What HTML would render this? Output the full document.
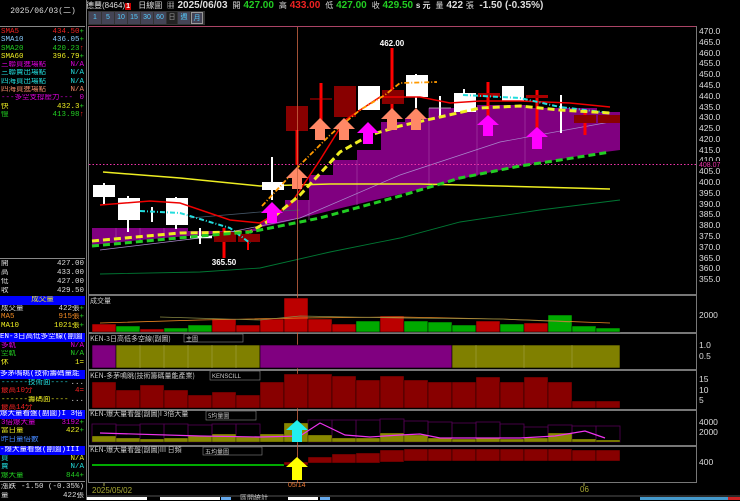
<!DOCTYPE html>
<html><head><meta charset="utf-8"><style>
*{margin:0;padding:0;box-sizing:border-box}
body{width:740px;height:500px;background:#000;overflow:hidden;position:relative;font-family:"Liberation Sans","Noto Sans CJK TC",sans-serif;color:#ddd}
.a{position:absolute;white-space:nowrap}
.lp{position:absolute;left:0;width:85px;font-size:7.5px;line-height:8.3px;font-family:"Liberation Mono","Noto Sans CJK TC",monospace;overflow:hidden}
.r{display:flex;justify-content:space-between;padding:0 1px;height:8.3px;white-space:nowrap;overflow:hidden}
.h{background:#0000ff;color:#fff;text-align:center;overflow:hidden;white-space:nowrap;height:9px;line-height:9px}
</style></head><body>
<div class="a" style="left:0;top:0;width:86px;height:26px;font-size:8px;color:#ddd;text-align:center;line-height:24px;font-family:'Liberation Mono','Noto Sans CJK TC',monospace">2025/06/03(二)</div>
<div class="a" style="left:86px;top:0;font-size:10px;font-weight:bold;color:#ddd;line-height:11px">
<span style="font-size:8px;font-weight:normal">德豐(8464)</span><span style="background:#c00;color:#fff;font-size:7px;padding:0 1px">1</span>
<span style="font-size:8px;font-weight:normal">&nbsp;&nbsp;日線圖&nbsp;&nbsp;▦</span> 2025/06/03 <span style="font-size:8px;font-weight:normal">&nbsp;開</span> <span style="color:#2c2">427.00</span> <span style="font-size:8px;font-weight:normal">&nbsp;高</span> <span style="color:#e22">433.00</span> <span style="font-size:8px;font-weight:normal">&nbsp;低</span> <span style="color:#2c2">427.00</span> <span style="font-size:8px;font-weight:normal">&nbsp;收</span> <span style="color:#2c2">429.50</span> <span style="font-size:8px">s 元</span> <span style="font-size:8px;font-weight:normal">&nbsp;量</span> 422 <span style="font-size:8px;font-weight:normal">張</span>&nbsp; -1.50 (-0.35%)</div>
<div class="a" style="left:88px;top:11px;height:14px;width:117px;background:#333;display:flex;gap:1px;padding:1px;font-size:7px">
<span style="background:#445;color:#5cf;width:12px;text-align:center;line-height:12px">1</span><span style="background:#445;color:#5cf;width:12px;text-align:center;line-height:12px">5</span><span style="background:#445;color:#5cf;width:12px;text-align:center;line-height:12px">10</span><span style="background:#445;color:#5cf;width:12px;text-align:center;line-height:12px">15</span><span style="background:#445;color:#5cf;width:12px;text-align:center;line-height:12px">30</span><span style="background:#445;color:#5cf;width:12px;text-align:center;line-height:12px">60</span><span style="background:#222;color:#999;width:10px;text-align:center;line-height:12px">日</span><span style="background:#445;color:#5cf;width:12px;text-align:center;line-height:12px">週</span><span style="background:#445;color:#5cf;width:12px;text-align:center;line-height:12px;border:1px solid #999">月</span></div>

<div class="lp" style="top:26px;border-top:1px solid #888;padding-top:1px">
<div class="r"><span style="color:#e22">SMA5</span><span style="color:#e22">434.50<span style="color:#2c2">+</span></span></div>
<div class="r"><span style="color:#8cf">SMA10</span><span style="color:#8cf">436.05<span style="color:#2c2">+</span></span></div>
<div class="r"><span style="color:#2c2">SMA20</span><span style="color:#2c2">420.23<span style="color:#e22">↑</span></span></div>
<div class="r"><span style="color:#ee2">SMA60</span><span style="color:#ee2">396.79<span style="color:#2c2">+</span></span></div>
<div class="r"><span style="color:#d0d">三聯買進場點</span><span style="color:#d0d">N/A</span></div>
<div class="r"><span style="color:#2dd">三聯賣出場點</span><span style="color:#2dd">N/A</span></div>
<div class="r"><span style="color:#2dd">四海買出場點</span><span style="color:#2dd">N/A</span></div>
<div class="r"><span style="color:#e86">四海買進場點</span><span style="color:#e86">N/A</span></div>
<div class="r"><span style="color:#d0d">---多空支撐壓力---</span><span style="color:#d0d">0</span></div>
<div class="r"><span style="color:#ee2">快</span><span style="color:#ee2">432.3<span style="color:#2c2">+</span></span></div>
<div class="r"><span style="color:#2c2">慢</span><span style="color:#2c2">413.98<span style="color:#e22">↑</span></span></div>
</div>
<div class="lp" style="top:258px;border-top:1px solid #888;padding-top:1px;line-height:9px">
<div class="r" style="height:9px"><span>開</span><span>427.00</span></div>
<div class="r" style="height:9px"><span>高</span><span>433.00</span></div>
<div class="r" style="height:9px"><span>低</span><span>427.00</span></div>
<div class="r" style="height:9px"><span>收</span><span>429.50</span></div>
</div>
<div class="lp" style="top:296px">
<div class="h" style="color:#ee2">成交量</div>
<div class="r"><span>成交量</span><span>422張<span style="color:#2c2">+</span></span></div>
<div class="r"><span style="color:#e82">MA5</span><span style="color:#e82">915張<span style="color:#2c2">+</span></span></div>
<div class="r"><span style="color:#ee2">MA10</span><span style="color:#ee2">1021張<span style="color:#2c2">+</span></span></div>
</div>
<div class="lp" style="top:333px">
<div class="h" style="text-align:left">EN-3日高低多空線(副圖</div>
<div class="r"><span style="color:#d0d">多軌</span><span style="color:#d0d">N/A</span></div>
<div class="r"><span style="color:#2c2">空軌</span><span style="color:#2c2">N/A</span></div>
<div class="r"><span style="color:#ee2">休</span><span style="color:#ee2">1=</span></div>
</div>
<div class="lp" style="top:370px">
<div class="h" style="text-align:left">多茅鳴眺(技術籌碼量能</div>
<div class="r"><span style="color:#2dd">------技術面----</span><span>...</span></div>
<div class="r"><span style="color:#e22">最高10分</span><span style="color:#e22">4=</span></div>
<div class="r"><span style="color:#ee2">------籌碼面----</span><span>...</span></div>
<div class="r"><span style="color:#e22">最高14分</span><span></span></div>
</div>
<div class="lp" style="top:410px">
<div class="h" style="text-align:left">爆大量看盤(副圖)I 3倍</div>
<div class="r"><span style="color:#d0d">3倍爆大量</span><span style="color:#d0d">3192<span style="color:#2c2">+</span></span></div>
<div class="r"><span style="color:#ee2">當日量</span><span style="color:#ee2">422<span style="color:#2c2">+</span></span></div>
<div class="r"><span style="color:#48f">昨日量倍數</span><span></span></div>
</div>
<div class="lp" style="top:446px">
<div class="h" style="text-align:left">-爆大量看盤(副圖)III</div>
<div class="r"><span style="color:#2dd">買</span><span style="color:#ee2">N/A</span></div>
<div class="r"><span style="color:#2dd">賣</span><span style="color:#2dd">N/A</span></div>
<div class="r"><span style="color:#2c2">爆大量</span><span style="color:#2c2">844<span style="color:#2c2">+</span></span></div>
</div>
<div class="lp" style="top:481px;border-top:1px solid #888;padding-top:1px;line-height:9px">
<div class="r" style="height:9px"><span>漲跌</span><span>-1.50 (-0.35%)</span></div>
<div class="r" style="height:9px"><span>量</span><span>422張</span></div>
</div>

<svg class="a" style="left:0;top:0" width="740" height="500" font-family="Liberation Sans" font-size="8">
<line x1="86.5" y1="0" x2="86.5" y2="500" stroke="#777"/>
<g fill="none" stroke="#777">
<rect x="88.5" y="26.5" width="608" height="268"/>
<rect x="88.5" y="295.5" width="608" height="37"/>
<rect x="88.5" y="333.5" width="608" height="36"/>
<rect x="88.5" y="370.5" width="608" height="39"/>
<rect x="88.5" y="410.5" width="608" height="35"/>
<rect x="88.5" y="446.5" width="608" height="36"/>
</g>
<line x1="89" y1="26.5" x2="696" y2="26.5" stroke="#a46"/>
<polygon fill="#800080" points="92,228 188,228 188,231 260,231 260,222 285,210 285,200 309,200 309,175 333,175 333,160 357,160 357,150 381,150 381,122 405,122 405,118 429,118 429,108 477,108 477,105 525,105 525,108 597,108 597,112 620,112 620,150 597,153 525,165 477,175 405,193 333,210 285,222 237,232 188,236 140,240 92,245"/>
<g stroke="#a4a" stroke-width="0.6"><line x1="116" y1="228" x2="116" y2="244"/><line x1="140" y1="228" x2="140" y2="240"/><line x1="164" y1="228" x2="164" y2="238"/><line x1="309" y1="200" x2="309" y2="220"/><line x1="357" y1="160" x2="357" y2="205"/><line x1="429" y1="108" x2="429" y2="188"/><line x1="477" y1="108" x2="477" y2="176"/><line x1="525" y1="105" x2="525" y2="166"/></g>
<polyline fill="none" stroke="#a8c" stroke-width="0.7" points="100,250 200,238 300,218 400,175 500,142 610,122"/>
<polyline fill="none" stroke="#073" stroke-width="0.9" points="100,274 200,272 260,268 330,252 400,238 460,222 540,210 620,200"/>
<polyline fill="none" stroke="#456" stroke-width="0.8" points="190,218 260,212 300,210"/>
<line x1="89" y1="164.5" x2="696" y2="164.5" stroke="#e3a" stroke-dasharray="1.5,2"/>
<polyline fill="none" stroke="#ee2" stroke-width="1.5" points="103,172 180,178 260,186 330,184 420,184 500,186 610,189"/>
<g>
<line x1="104" y1="183" x2="104" y2="205" stroke="#fff" stroke-width="2"/><rect x="93" y="185" width="22" height="12" fill="#fff"/>
<line x1="128" y1="196" x2="128" y2="232" stroke="#fff" stroke-width="2"/><rect x="118" y="198" width="22" height="22" fill="#fff"/>
<line x1="152" y1="207" x2="152" y2="222" stroke="#fff" stroke-width="2"/>
<line x1="176" y1="197" x2="176" y2="229" stroke="#fff" stroke-width="2"/><rect x="166" y="198" width="22" height="27" fill="#fff"/>
<line x1="200" y1="228" x2="200" y2="244" stroke="#fff" stroke-width="2"/><line x1="190" y1="237" x2="212" y2="237" stroke="#fff" stroke-width="2.5"/>
<line x1="224" y1="228" x2="224" y2="258" stroke="#f00" stroke-width="3"/><rect x="214" y="232" width="22" height="10" fill="#800"/>
<line x1="248" y1="230" x2="248" y2="250" stroke="#f00" stroke-width="2"/><rect x="238" y="234" width="22" height="8" fill="#800"/>
<line x1="272" y1="157" x2="272" y2="200" stroke="#fff" stroke-width="2"/><rect x="262" y="182" width="22" height="8" fill="#fff"/>
<rect x="286" y="106" width="22" height="25" fill="#800"/><line x1="297" y1="130" x2="297" y2="165" stroke="#f00" stroke-width="3"/>
<line x1="321" y1="83" x2="321" y2="130" stroke="#f00" stroke-width="3"/><line x1="310" y1="99" x2="332" y2="99" stroke="#c00" stroke-width="1"/>
<rect x="334" y="86" width="22" height="31" fill="#800"/>
<rect x="358" y="86" width="22" height="24" fill="#fff"/>
<line x1="392" y1="48" x2="392" y2="118" stroke="#f00" stroke-width="3"/><rect x="382" y="90" width="22" height="14" fill="#800"/>
<line x1="416" y1="74" x2="416" y2="108" stroke="#fff" stroke-width="2"/><rect x="406" y="75" width="22" height="22" fill="#fff"/>
<line x1="440" y1="96" x2="440" y2="118" stroke="#fff" stroke-width="2"/><line x1="429" y1="108" x2="451" y2="108" stroke="#ccc" stroke-width="0.8"/>
<line x1="464" y1="89" x2="464" y2="112" stroke="#fff" stroke-width="2"/><rect x="454" y="93" width="22" height="19" fill="#fff"/>
<line x1="488" y1="82" x2="488" y2="127" stroke="#f00" stroke-width="3"/><rect x="478" y="93" width="22" height="4" fill="#a00"/>
<rect x="502" y="86" width="22" height="15" fill="#fff"/>
<line x1="537" y1="90" x2="537" y2="148" stroke="#f00" stroke-width="3"/><rect x="526" y="95" width="22" height="3" fill="#a00"/>
<line x1="561" y1="95" x2="561" y2="133" stroke="#fff" stroke-width="2"/>
<line x1="585" y1="113" x2="585" y2="135" stroke="#f00" stroke-width="3"/><rect x="574" y="115" width="22" height="8" fill="#800"/>
<rect x="598" y="115" width="22" height="8" fill="#800"/>
</g>
<polyline fill="none" stroke="#e00" stroke-width="1.5" points="100,205 150,201 180,203 230,220 260,223 290,205 320,160 345,120 380,97 420,97 450,103 480,101 520,101 570,103 610,107"/>
<polyline fill="none" stroke="#2dd" stroke-width="2" stroke-dasharray="5,2,1,2" points="140,211 180,213 230,228 250,243"/>
<polyline fill="none" stroke="#2dd" stroke-width="2" stroke-dasharray="5,2,1,2" points="463,95 520,98 560,107 610,113"/>
<polyline fill="none" stroke="#f90" stroke-width="1.8" stroke-dasharray="5,2,1,2" points="262,206 300,165 330,135 360,110 385,95 400,83 437,82"/>
<polyline fill="none" stroke="#ee2" stroke-width="3" stroke-dasharray="7,4" points="92,241 180,233 250,232 270,220 300,195 340,152 370,135 400,126 440,117 480,108 520,106 560,110 610,113"/>
<polyline fill="none" stroke="#2c2" stroke-width="3" stroke-dasharray="7,4" points="92,246 200,236 250,232 320,218 400,196 460,178 520,166 560,160 610,152"/>
<g fill="#f86">
<polygon points="297,167 308,178 302,178 302,189 292,189 292,178 286,178"/>
<polygon points="320,118 331,129 325,129 325,140 315,140 315,129 309,129"/>
<polygon points="344,118 355,129 349,129 349,140 339,140 339,129 333,129"/>
<polygon points="392,108 403,119 397,119 397,130 387,130 387,119 381,119"/>
<polygon points="416,108 427,119 421,119 421,130 411,130 411,119 405,119"/>
</g>
<g fill="#f0f">
<polygon points="272,202 283,213 277,213 277,223 267,223 267,213 261,213"/>
<polygon points="368,122 379,133 373,133 373,144 363,144 363,133 357,133"/>
<polygon points="488,115 499,125 493,125 493,136 483,136 483,125 477,125"/>
<polygon points="537,127 548,137 542,137 542,149 532,149 532,137 526,137"/>
</g>
<text x="392" y="46" fill="#fff" font-weight="bold" text-anchor="middle">462.00</text>
<text x="224" y="265" fill="#fff" font-weight="bold" text-anchor="middle">365.50</text>
<line x1="297.5" y1="27" x2="297.5" y2="483" stroke="#c64" stroke-width="0.8"/>
<g fill="#ddd" font-size="8.5">
<text x="699" y="34">470.0</text><text x="699" y="45">465.0</text><text x="699" y="56">460.0</text><text x="699" y="66">455.0</text><text x="699" y="77">450.0</text><text x="699" y="88">445.0</text><text x="699" y="99">440.0</text><text x="699" y="110">435.0</text><text x="699" y="120">430.0</text><text x="699" y="131">425.0</text><text x="699" y="142">420.0</text><text x="699" y="153">415.0</text><text x="699" y="163">410.0</text><text x="699" y="185">400.0</text><text x="699" y="196">395.0</text><text x="699" y="207">390.0</text><text x="699" y="217">385.0</text><text x="699" y="228">380.0</text><text x="699" y="239">375.0</text><text x="699" y="250">370.0</text><text x="699" y="261">365.0</text><text x="699" y="271">360.0</text><text x="699" y="282">355.0</text><text x="699" y="174">405.0</text>
</g>
<rect x="697" y="161" width="43" height="7" fill="#000"/><text x="699" y="167" fill="#e3a" font-size="7">408.07</text>
<text x="90" y="303" fill="#ccc" font-size="7" font-family="Noto Sans CJK TC">成交量</text>
<g stroke="#000" stroke-width="0.5">
<rect x="92" y="324" width="24" height="8" fill="#b00"/><rect x="116" y="326" width="24" height="6" fill="#0a0"/><rect x="140" y="329" width="24" height="3" fill="#b00"/><rect x="164" y="328" width="24" height="4" fill="#0a0"/><rect x="188" y="325" width="24" height="7" fill="#0a0"/><rect x="212" y="319" width="24" height="13" fill="#b00"/><rect x="236" y="325" width="24" height="7" fill="#b00"/><rect x="260" y="319" width="24" height="13" fill="#b00"/><rect x="284" y="298" width="24" height="34" fill="#b00"/><rect x="308" y="319" width="24" height="13" fill="#b00"/><rect x="332" y="324" width="24" height="8" fill="#b00"/><rect x="356" y="321" width="24" height="11" fill="#0a0"/><rect x="380" y="316" width="24" height="16" fill="#b00"/><rect x="404" y="321" width="24" height="11" fill="#0a0"/><rect x="428" y="322" width="24" height="10" fill="#0a0"/><rect x="452" y="325" width="24" height="7" fill="#0a0"/><rect x="476" y="321" width="24" height="11" fill="#b00"/><rect x="500" y="324" width="24" height="8" fill="#0a0"/><rect x="524" y="323" width="24" height="9" fill="#b00"/><rect x="548" y="315" width="24" height="17" fill="#0a0"/><rect x="572" y="326" width="24" height="6" fill="#0a0"/><rect x="596" y="328" width="24" height="4" fill="#0a0"/>
</g>
<polyline fill="none" stroke="#e82" stroke-width="0.8" points="100,323 200,320 300,318 400,317 500,319 610,323"/>
<polyline fill="none" stroke="#884" stroke-width="0.8" points="160,317 260,320 300,316 400,318 500,319 570,322"/>
<text x="699" y="318" fill="#ddd" font-size="8.5">2000</text>
<g stroke="#000" stroke-width="0.6">
<rect x="92" y="345" width="24" height="23" fill="#800080"/>
<rect x="116" y="345" width="144" height="23" fill="#808000"/>
<rect x="260" y="345" width="192" height="23" fill="#800080"/>
<rect x="452" y="345" width="168" height="23" fill="#808000"/>
</g>
<g stroke="#aa5" stroke-width="0.5"><line x1="140" y1="345" x2="140" y2="368"/><line x1="164" y1="345" x2="164" y2="368"/><line x1="188" y1="345" x2="188" y2="368"/><line x1="212" y1="345" x2="212" y2="368"/><line x1="236" y1="345" x2="236" y2="368"/><line x1="476" y1="345" x2="476" y2="368"/><line x1="524" y1="345" x2="524" y2="368"/><line x1="572" y1="345" x2="572" y2="368"/></g>
<text x="90" y="341" fill="#ccc" font-size="7" font-family="Noto Sans CJK TC">KEN-3日高低多空線(副圖)</text>
<rect x="184" y="334" width="59" height="8" fill="#000" stroke="#888" stroke-width="0.6"/><text x="186" y="341" fill="#ccc" font-size="6" font-family="Noto Sans CJK TC">主圖</text>
<text x="699" y="348" fill="#ddd" font-size="8.5">1.0</text><text x="699" y="359" fill="#ddd" font-size="8.5">0.5</text>
<g fill="#800" stroke="#000" stroke-width="0.4">
<rect x="92" y="382" width="24" height="26"/><rect x="116" y="390" width="24" height="18"/><rect x="140" y="385" width="24" height="23"/><rect x="164" y="390" width="24" height="18"/><rect x="188" y="395" width="24" height="13"/><rect x="212" y="392" width="24" height="16"/><rect x="236" y="395" width="24" height="13"/><rect x="260" y="382" width="24" height="26"/><rect x="284" y="374" width="24" height="34"/><rect x="308" y="374" width="24" height="34"/><rect x="332" y="376" width="24" height="32"/><rect x="356" y="380" width="24" height="28"/><rect x="380" y="376" width="24" height="32"/><rect x="404" y="380" width="24" height="28"/><rect x="428" y="382" width="24" height="26"/><rect x="452" y="382" width="24" height="26"/><rect x="476" y="377" width="24" height="31"/><rect x="500" y="382" width="24" height="26"/><rect x="524" y="377" width="24" height="31"/><rect x="548" y="382" width="24" height="26"/><rect x="572" y="401" width="24" height="7"/><rect x="596" y="401" width="24" height="7"/>
</g>
<text x="90" y="378" fill="#ccc" font-size="7" font-family="Noto Sans CJK TC">KEN-多茅鳴眺(技術籌碼量能產業)</text>
<rect x="210" y="371" width="50" height="9" fill="#000" stroke="#888" stroke-width="0.6"/><text x="212" y="378" fill="#ccc" font-size="6">KENSCILL</text>
<text x="699" y="382" fill="#ddd" font-size="8.5">15</text><text x="699" y="393" fill="#ddd" font-size="8.5">10</text><text x="699" y="403" fill="#ddd" font-size="8.5">5</text>
<g fill="none" stroke="#505" stroke-width="0.8">
<rect x="92" y="424" width="24" height="18"/><rect x="116" y="425" width="24" height="17"/><rect x="140" y="424" width="24" height="18"/><rect x="164" y="424" width="24" height="18"/><rect x="188" y="425" width="24" height="17"/><rect x="212" y="424" width="24" height="18"/><rect x="236" y="424" width="24" height="18"/><rect x="308" y="420" width="24" height="22"/><rect x="332" y="420" width="24" height="22"/><rect x="356" y="420" width="24" height="22"/><rect x="380" y="419" width="24" height="23"/><rect x="404" y="421" width="24" height="21"/><rect x="428" y="422" width="24" height="20"/><rect x="452" y="423" width="24" height="19"/><rect x="476" y="422" width="24" height="20"/><rect x="500" y="424" width="24" height="18"/><rect x="524" y="427" width="24" height="15"/><rect x="548" y="425" width="24" height="17"/><rect x="572" y="426" width="24" height="16"/><rect x="596" y="426" width="24" height="16"/>
</g>
<g fill="#880" stroke="#000" stroke-width="0.3">
<rect x="92" y="436" width="24" height="6"/><rect x="116" y="438" width="24" height="4"/><rect x="140" y="439" width="24" height="3"/><rect x="164" y="438" width="24" height="4"/><rect x="188" y="436" width="24" height="6"/><rect x="212" y="434" width="24" height="8"/><rect x="236" y="437" width="24" height="5"/><rect x="260" y="434" width="24" height="8"/><rect x="284" y="423" width="24" height="19"/><rect x="308" y="435" width="24" height="7"/><rect x="332" y="438" width="24" height="4"/><rect x="356" y="438" width="24" height="4"/><rect x="380" y="433" width="24" height="9"/><rect x="404" y="435" width="24" height="7"/><rect x="428" y="438" width="24" height="4"/><rect x="452" y="439" width="24" height="3"/><rect x="476" y="438" width="24" height="4"/><rect x="500" y="439" width="24" height="3"/><rect x="524" y="438" width="24" height="4"/><rect x="548" y="433" width="24" height="9"/><rect x="572" y="439" width="24" height="3"/><rect x="596" y="440" width="24" height="2"/>
</g>
<polyline fill="none" stroke="#e3e" stroke-width="1.2" points="100,433 200,436 260,437 300,436 320,423 345,435 370,437 400,435 420,434 440,438 480,438 520,438 555,436 585,431 605,438"/>
<polygon fill="#2ee" points="297,420 308,430 302,430 302,442 292,442 292,430 286,430"/>
<text x="90" y="416" fill="#ccc" font-size="7" font-family="Noto Sans CJK TC">KEN-爆大量看盤(副圖)I 3倍大量</text>
<rect x="206" y="411" width="50" height="9" fill="#000" stroke="#888" stroke-width="0.6"/><text x="208" y="418" fill="#ccc" font-size="6" font-family="Noto Sans CJK TC">5均量圖</text>
<text x="699" y="425" fill="#ddd" font-size="8.5">4000</text><text x="699" y="435" fill="#ddd" font-size="8.5">2000</text>
<line x1="92" y1="465" x2="284" y2="465" stroke="#0a0" stroke-width="2"/>
<g fill="#800" stroke="#000" stroke-width="0.4">
<rect x="284" y="462" width="24" height="3"/><rect x="308" y="457" width="24" height="6"/><rect x="332" y="454" width="24" height="9"/><rect x="356" y="453" width="24" height="10"/><rect x="380" y="450" width="24" height="12"/><rect x="404" y="449" width="24" height="12"/><rect x="428" y="449" width="24" height="12"/><rect x="452" y="449" width="24" height="12"/><rect x="476" y="449" width="24" height="12"/><rect x="500" y="449" width="24" height="12"/><rect x="524" y="449" width="24" height="12"/><rect x="548" y="449" width="24" height="12"/><rect x="572" y="450" width="24" height="11"/><rect x="596" y="450" width="24" height="11"/>
</g>
<polygon fill="#ff0" points="297,457 308,467 302,467 302,480 292,480 292,467 286,467"/>
<text x="90" y="452" fill="#ccc" font-size="7" font-family="Noto Sans CJK TC">KEN-爆大量看盤(副圖)III 日頻</text>
<rect x="203" y="447" width="59" height="8" fill="#000" stroke="#888" stroke-width="0.6"/><text x="205" y="454" fill="#ccc" font-size="6" font-family="Noto Sans CJK TC">五均量圖</text>
<text x="699" y="465" fill="#ddd" font-size="8.5">400</text>
<line x1="104" y1="483" x2="104" y2="486" stroke="#aa5"/><line x1="584" y1="483" x2="584" y2="486" stroke="#aa5"/>
<text x="92" y="493" fill="#aa3" font-size="8">2025/05/02</text>
<text x="288" y="487" fill="#e73" font-size="7">05/14</text>
<text x="580" y="492" fill="#aa3" font-size="8">06</text>
<line x1="86" y1="496" x2="740" y2="496" stroke="#555"/>
<rect x="87" y="497" width="60" height="3" fill="#fff"/><rect x="160" y="497" width="60" height="3" fill="#fff"/><rect x="221" y="497" width="10" height="3" fill="#6ae"/>
<text x="240" y="500" fill="#ccc" font-size="7" font-family="Noto Sans CJK TC">區間統計</text>
<rect x="288" y="497" width="30" height="3" fill="#fff"/><rect x="320" y="497" width="10" height="3" fill="#6ae"/>
<rect x="640" y="497" width="100" height="3" fill="#49c"/><rect x="728" y="497" width="12" height="3" fill="#c22"/>
</svg>
</body></html>
